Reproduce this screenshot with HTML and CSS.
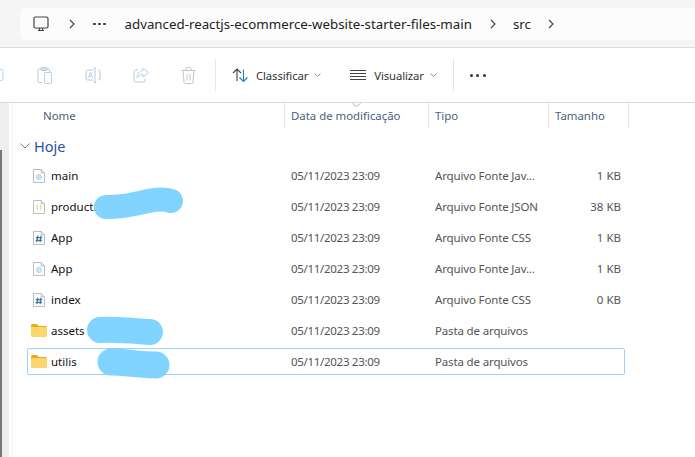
FILE: index.html
```html
<!DOCTYPE html>
<html lang="en">

<head>
    <meta charset="UTF-8">
    <meta name="viewport" content="width=device-width, initial-scale=1.0">
    <title>src</title>
    <link rel="stylesheet" href="styles.css">
</head>

<body>
    <div class="topbar">
        <div class="crumbs">
            <svg class="pc" width="16" height="16" viewBox="0 0 16 16" fill="none" stroke="#444" stroke-width="1.2">
                <rect x="1" y="1" width="14" height="11" rx="1.5" />
                <path d="M5 14.500h6M6.500 12v2.500M9.500 12v2.500" />
            </svg>
            <svg class="chev" width="6" height="10" viewBox="0 0 6 10" fill="none" stroke="#444" stroke-width="1.100">
                <path d="M1 1l4 4-4 4" />
            </svg>
            <span class="more"><i></i><i></i><i></i></span>
            <span class="crumb c1">advanced-reactjs-ecommerce-website-starter-files-main</span>
            <svg class="chev c2" width="6" height="10" viewBox="0 0 6 10" fill="none" stroke="#444" stroke-width="1.100">
                <path d="M1 1l4 4-4 4" />
            </svg>
            <span class="crumb c3">src</span>
            <svg class="chev c4" width="6" height="10" viewBox="0 0 6 10" fill="none" stroke="#444" stroke-width="1.100">
                <path d="M1 1l4 4-4 4" />
            </svg>
        </div>
    </div>

    <div class="toolbar">
        <svg class="tool t0" width="4" height="16" viewBox="0 0 4 16" fill="none" stroke="#a9d5f5" stroke-width="1">
            <rect x="-8" y="2.500" width="11" height="11" rx="2" />
        </svg>
        <svg class="tool" width="16" height="17" viewBox="0 0 16 17" fill="none" stroke="#c4c4c4" stroke-width="1">
            <path d="M5 15.500H2.500a1.500 1.500 0 0 1-1.500-1.500V3.500A1.500 1.500 0 0 1 2.500 2H11a1.500 1.500 0 0 1 1.500 1.500V5" />
            <rect x="4" y="0.500" width="6" height="3" rx="1" />
            <rect x="7.500" y="5.500" width="7" height="11" rx="1" stroke="#a9d5f5" />
        </svg>
        <svg class="tool" width="16" height="17" viewBox="0 0 16 17" fill="none" stroke="#c4c4c4" stroke-width="1">
            <path d="M8 3H2.500A1.500 1.500 0 0 0 1 4.500v7A1.500 1.500 0 0 0 2.500 13H8M13 3h.500A1.500 1.500 0 0 1 15 4.500v7a1.500 1.500 0 0 1-1.500 1.500H13" />
            <path d="M8.500 1h2.500M8.500 15.500h2.500M10 1v14.500M3.500 11l2-6 2 6M4.300 9h2.500" stroke="#a9d5f5" />
        </svg>
        <svg class="tool" width="16" height="16" viewBox="0 0 16 16" fill="none" stroke="#c4c4c4" stroke-width="1">
            <path d="M5 3H2.500A1.500 1.500 0 0 0 1 4.500v9A1.500 1.500 0 0 0 2.500 15h8a1.500 1.500 0 0 0 1.500-1.500V12" />
            <path d="M10 1l5.500 4.500L10 10V7.500c-3 0-4.500 1-6 3.500 0-4 2-7 6-7.500z" stroke="#a9d5f5" />
        </svg>
        <svg class="tool" width="15" height="17" viewBox="0 0 15 17" fill="none" stroke="#c4c4c4" stroke-width="1">
            <path d="M0.500 3.500h14M5 3.500V2a1.500 1.500 0 0 1 1.500-1.500h2A1.500 1.500 0 0 1 10 2v1.500M2 3.500l1 11.500a1.500 1.500 0 0 0 1.500 1.500h6a1.500 1.500 0 0 0 1.500-1.500l1-11.500M6 7v6.500M9 7v6.500" />
        </svg>
        <span class="sep s1"></span>
        <svg class="sort" width="16" height="14" viewBox="0 0 16 14" fill="none" stroke-width="1.100">
            <path d="M1 5l4-4 4 4M5 1v12" stroke="#444" />
            <path d="M7.500 9.500l4 4 4-4M11.500 1.500v12" stroke="#1f7fd0" />
        </svg>
        <span class="label">Classificar</span>
        <svg class="caret" width="7" height="4" viewBox="0 0 7 4" fill="none" stroke="#888" stroke-width="0.900">
            <path d="M.5.500l3 3 3-3" />
        </svg>
        <svg class="lines" width="16" height="11" viewBox="0 0 16 11" fill="none" stroke="#444" stroke-width="1">
            <path d="M0 .500h16M0 3.500h16M0 6.500h16M0 9.500h16" />
        </svg>
        <span class="label">Visualizar</span>
        <svg class="caret" width="7" height="4" viewBox="0 0 7 4" fill="none" stroke="#888" stroke-width="0.900">
            <path d="M.5.500l3 3 3-3" />
        </svg>
        <span class="sep s2"></span>
        <span class="dots"><i></i><i></i><i></i></span>
    </div>

    <div class="main">
        <div class="side">
            <div class="thumb"></div>
        </div>
        <div class="content">
            <div class="head">
                <div class="hcell hname">Nome</div>
                <div class="hcell hdate">Data de modificação
                    <svg class="hsort" width="9" height="4" viewBox="0 0 9 4" fill="none" stroke="#aaa" stroke-width="0.900">
                        <path d="M.5.500l4 3 4-3" />
                    </svg>
                </div>
                <div class="hcell htype">Tipo</div>
                <div class="hcell hsize">Tamanho</div>
            </div>

            <div class="group">
                <svg width="10" height="6" viewBox="0 0 10 6" fill="none" stroke="#777" stroke-width="1">
                    <path d="M.5.500l4.500 4.500 4.500-4.500" />
                </svg>
                <span>Hoje</span>
            </div>

            <div class="row">
                <div class="name">
                    <svg class="ficon" width="12" height="14" viewBox="0 0 13 15">
                        <path d="M.5.500h8.500l3.500 3.500v10.500h-12z" fill="#fff" stroke="#b5b5b5" />
                        <path d="M9 .500v3.500h3.500" fill="#eee" stroke="#b5b5b5" />
                        <circle cx="6.500" cy="8.500" r="2.800" fill="#cde3f2" stroke="#9cc4de" stroke-dasharray="1.500 .8" />
                    </svg>main
                </div>
                <div class="date">05/11/2023 23:09</div>
                <div class="type">Arquivo Fonte Jav...</div>
                <div class="size">1 KB</div>
            </div>
            <div class="row">
                <div class="name">
                    <svg class="ficon" width="12" height="14" viewBox="0 0 13 15" fill="none">
                        <path d="M.5.500h8.500l3.500 3.500v10.500h-12z" fill="#fff" stroke="#b5b5b5" />
                        <path d="M9 .500v3.500h3.500" fill="#eee" stroke="#b5b5b5" />
                        <path d="M5.500 5.500c-1 0-1 .5-1 2.500s0 2.500 1 2.500M7.500 5.500c1 0 1 .5 1 2.500s0 2.500-1 2.500" stroke="#c9c94f" />
                    </svg>products
                </div>
                <div class="date">05/11/2023 23:09</div>
                <div class="type">Arquivo Fonte JSON</div>
                <div class="size">38 KB</div>
            </div>
            <div class="row">
                <div class="name">
                    <svg class="ficon" width="12" height="14" viewBox="0 0 13 15" fill="none">
                        <path d="M.5.500h8.500l3.500 3.500v10.500h-12z" fill="#fff" stroke="#b5b5b5" />
                        <path d="M9 .500v3.500h3.500" fill="#eee" stroke="#b5b5b5" />
                        <path d="M5.200 5l-1 7M8.700 5l-1 7M3 7h7M2.800 10h7" stroke="#3f7a9c" stroke-width="1.400" />
                    </svg>App
                </div>
                <div class="date">05/11/2023 23:09</div>
                <div class="type">Arquivo Fonte CSS</div>
                <div class="size">1 KB</div>
            </div>
            <div class="row">
                <div class="name">
                    <svg class="ficon" width="12" height="14" viewBox="0 0 13 15">
                        <path d="M.5.500h8.500l3.500 3.500v10.500h-12z" fill="#fff" stroke="#b5b5b5" />
                        <path d="M9 .500v3.500h3.500" fill="#eee" stroke="#b5b5b5" />
                        <circle cx="6.500" cy="8.500" r="2.800" fill="#cde3f2" stroke="#9cc4de" stroke-dasharray="1.500 .8" />
                    </svg>App
                </div>
                <div class="date">05/11/2023 23:09</div>
                <div class="type">Arquivo Fonte Jav...</div>
                <div class="size">1 KB</div>
            </div>
            <div class="row">
                <div class="name">
                    <svg class="ficon" width="12" height="14" viewBox="0 0 13 15" fill="none">
                        <path d="M.5.500h8.500l3.500 3.500v10.500h-12z" fill="#fff" stroke="#b5b5b5" />
                        <path d="M9 .500v3.500h3.500" fill="#eee" stroke="#b5b5b5" />
                        <path d="M5.200 5l-1 7M8.700 5l-1 7M3 7h7M2.800 10h7" stroke="#3f7a9c" stroke-width="1.400" />
                    </svg>index
                </div>
                <div class="date">05/11/2023 23:09</div>
                <div class="type">Arquivo Fonte CSS</div>
                <div class="size">0 KB</div>
            </div>
            <div class="row">
                <div class="name">
                    <svg class="ficon folder" width="16" height="13" viewBox="0 0 16 13">
                        <path d="M0 1.500A1.500 1.500 0 0 1 1.500 0h4L8 2h6.500A1.500 1.500 0 0 1 16 3.500V4H0z" fill="#eeaa11" />
                        <path d="M0 3h16v8.500a1.500 1.500 0 0 1-1.500 1.500h-13A1.500 1.500 0 0 1 0 11.500z" fill="#fcd56f" />
                    </svg>assets
                </div>
                <div class="date">05/11/2023 23:09</div>
                <div class="type">Pasta de arquivos</div>
                <div class="size"></div>
            </div>
            <div class="row selected">
                <div class="name">
                    <svg class="ficon folder" width="16" height="13" viewBox="0 0 16 13">
                        <path d="M0 1.500A1.500 1.500 0 0 1 1.500 0h4L8 2h6.500A1.500 1.500 0 0 1 16 3.500V4H0z" fill="#eeaa11" />
                        <path d="M0 3h16v8.500a1.500 1.500 0 0 1-1.500 1.500h-13A1.500 1.500 0 0 1 0 11.500z" fill="#fcd56f" />
                    </svg>utilis
                </div>
                <div class="date">05/11/2023 23:09</div>
                <div class="type">Pasta de arquivos</div>
                <div class="size"></div>
            </div>
        </div>
    </div>

    <!-- marker scribbles on top of the screenshot -->
    <svg class="scribble" width="695" height="457" viewBox="0 0 695 457" fill="none" stroke="#80d4ff" stroke-linecap="round" stroke-linejoin="round">
        <path d="M106 207C125 207 135 204 148 201C158 199 165 199 171 201" stroke-width="24" />
        <path d="M100 330C115 329 135 331 150 332" stroke-width="26" />
        <path d="M111 362C125 362 140 365 156 365" stroke-width="27" />
    </svg>
</body>

</html>
```

FILE: styles.css
```css
* {
    box-sizing: border-box;
}

body {
    margin: 0;
    width: 695px;
    height: 457px;
    overflow: hidden;
    position: relative;
    background-color: white;
    font-family: "Noto Sans", "Open Sans", sans-serif;
    font-size: 11.5px;
    color: #555;
}

/* address bar */
.topbar {
    height: 48px;
    padding: 8px 0 7px 20px;
    background-color: #f5f5f5;
    border-bottom: 1px solid #dcdcdc;
}

.crumbs {
    height: 32px;
    display: flex;
    align-items: center;
    padding-left: 13px;
    background-color: #fcfcfc;
    border-radius: 5px 0 0 5px;
    color: #222;
    font-size: 13.3px;
}

.chev {
    margin-left: 20px;
}

.more {
    margin-left: 18px;
    display: flex;
    gap: 2.500px;
}

.more i {
    width: 2.500px;
    height: 2.500px;
    background-color: #333;
    border-radius: 50%;
}

.c1 {
    margin-left: 19px;
}

.chev.c2 {
    margin-left: 18px;
}

.c3 {
    margin-left: 17px;
}

.chev.c4 {
    margin-left: 17px;
}

/* command bar */
.toolbar {
    height: 55px;
    display: flex;
    align-items: center;
    border-bottom: 1px solid #d9d9d9;
    font-size: 11.3px;
    color: #333;
}

.tool {
    margin-right: 32px;
}

.t0 {
    margin-right: 33px;
}

.sep {
    width: 1px;
    height: 32px;
    background-color: #e6e6e6;
}

.s1 {
    margin-left: -13px;
}

.sort {
    margin-left: 16px;
}

.label {
    margin-left: 8px;
    letter-spacing: -0.1px;
}

.caret {
    margin-left: 6px;
}

.lines {
    margin-left: 29px;
}

.s2 {
    margin-left: 16px;
}

.dots {
    margin-left: 16px;
    display: flex;
    gap: 3.5px;
}

.dots i {
    width: 3px;
    height: 3px;
    border-radius: 50%;
    background-color: #333;
}

/* file list */
.main {
    display: flex;
    height: 354px;
}

.side {
    width: 12px;
    height: 100%;
    padding-top: 47px;
    background-color: #eeeeee;
    border-right: 3px solid white;
    box-shadow: 1px 0 0 #f3f3f3;
}

.thumb {
    width: 2px;
    height: 100%;
    background-color: #777;
}

.content {
    flex: 1;
}

.head {
    display: grid;
    grid-template-columns: 273px 144px 120px 80px;
    height: 25px;
    color: #4a5f80;
    font-size: 11.4px;
}

.hcell {
    position: relative;
    line-height: 25px;
    border-right: 1px solid #e5e5e5;
}

.hname {
    padding-left: 31px;
}

.hdate {
    padding-left: 6px;
}

.htype {
    padding-left: 6px;
}

.hsize {
    padding-left: 6px;
}

.hsort {
    position: absolute;
    left: 67px;
    top: 0;
}

.group {
    display: flex;
    align-items: center;
    gap: 4px;
    height: 34px;
    padding-top: 1px;
    padding-left: 8px;
    color: #2b50a8;
    font-size: 14.5px;
}

.row {
    display: grid;
    grid-template-columns: 259px 144px 115px 71px;
    align-items: center;
    width: 598px;
    height: 27px;
    margin-left: 15px;
    margin-bottom: 4px;
    padding-left: 4px;
    border: 1px solid transparent;
    border-radius: 2px;
}

.selected {
    border-color: #99d1ff;
}

.name {
    display: flex;
    align-items: center;
    color: #111;
}

.date {
    letter-spacing: -0.3px;
}

.type {
    letter-spacing: -0.15px;
}

.ficon {
    margin-left: 1px;
    margin-right: 6px;
}

.ficon.folder {
    margin-left: -1px;
    margin-right: 4px;
}

.size {
    text-align: right;
}

.scribble {
    position: absolute;
    top: 0;
    left: 0;
}
```
